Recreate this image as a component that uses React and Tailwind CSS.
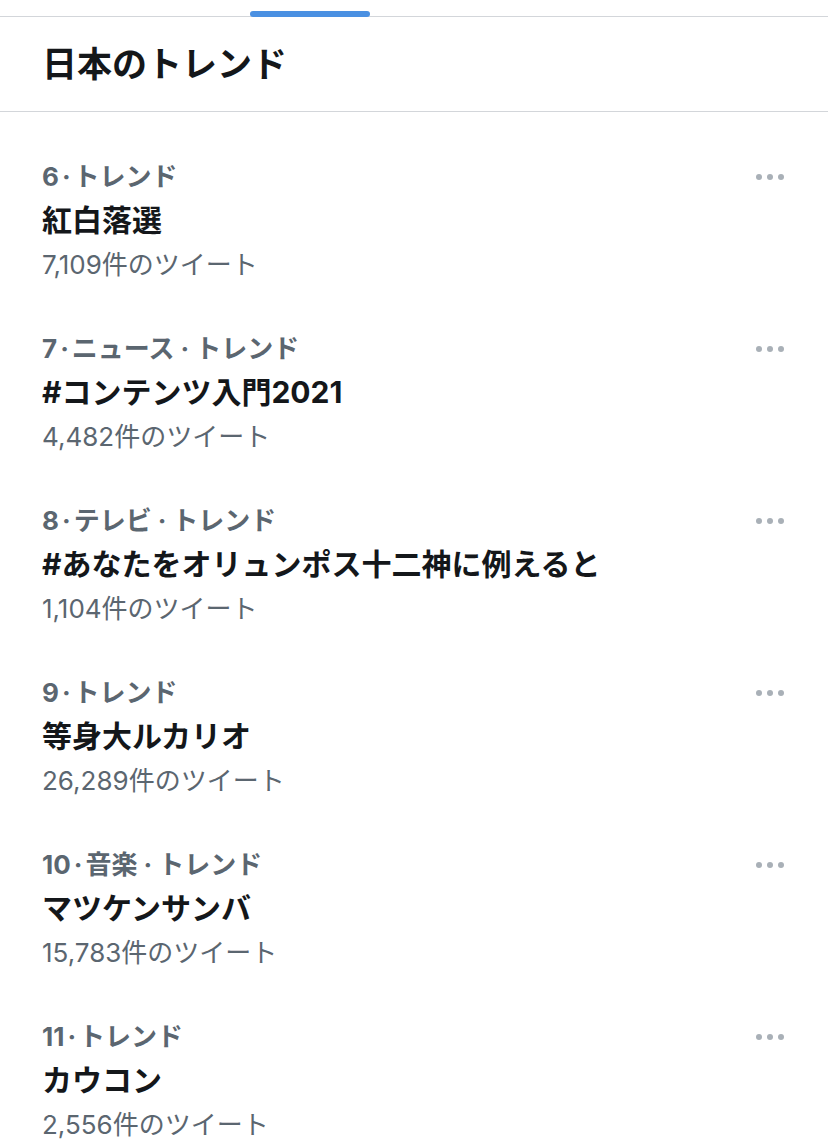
import React from "react";

const items = [
  { meta: ["6", "トレンド"], title: "紅白落選", count: "7,109" },
  { meta: ["7", "ニュース", "トレンド"], title: "#コンテンツ入門2021", count: "4,482" },
  { meta: ["8", "テレビ", "トレンド"], title: "#あなたをオリュンポス十二神に例えると", count: "1,104" },
  { meta: ["9", "トレンド"], title: "等身大ルカリオ", count: "26,289" },
  { meta: ["10", "音楽", "トレンド"], title: "マツケンサンバ", count: "15,783" },
  { meta: ["11", "トレンド"], title: "カウコン", count: "2,556" },
];

const font = { fontFamily: 'Inter, "Noto Sans CJK JP", sans-serif' };

function Dots() {
  return (
    <div className="flex items-center gap-[5px] pt-[1px]">
      <span className="w-[6px] h-[6px] rounded-full bg-[#a9b0b7]" />
      <span className="w-[6px] h-[6px] rounded-full bg-[#a9b0b7]" />
      <span className="w-[6px] h-[6px] rounded-full bg-[#a9b0b7]" />
    </div>
  );
}

export default function App() {
  return (
    <div className="w-[828px] h-[1147px] bg-white overflow-hidden" style={font}>
      <div className="relative h-[17px] border-b border-[#d3d6da]">
        <div className="absolute left-[250px] top-[11px] w-[120px] h-[6px] rounded-full bg-[#4a90e2]" />
      </div>
      <div className="h-[95px] border-b border-[#d3d6da] flex items-center px-[42px]">
        <h1 className="text-[35px] leading-[40px] font-bold text-[#14171a]">日本のトレンド</h1>
      </div>
      <div className="pt-[22px]">
        {items.map((it, i) => (
          <div key={i} className="flex justify-between pl-[42px] pr-[44px] py-[20px]">
            <div className="flex flex-col">
              <div className="h-[44px] flex items-center text-[26px] font-bold text-[#5b6670]">
                {it.meta.map((m, j) => (
                  <React.Fragment key={j}>
                    {j > 0 && <span className={j === 1 ? "mx-[3px]" : "mx-[6px]"}>·</span>}
                    <span>{m}</span>
                  </React.Fragment>
                ))}
              </div>
              <div className="h-[44px] flex items-center text-[30px] font-bold text-[#14171a]">{it.title}</div>
              <div className="h-[44px] flex items-center text-[26px] text-[#5b6670]">{it.count}件のツイート</div>
            </div>
            <div className="h-[44px] flex items-center">
              <Dots />
            </div>
          </div>
        ))}
      </div>
    </div>
  );
}
